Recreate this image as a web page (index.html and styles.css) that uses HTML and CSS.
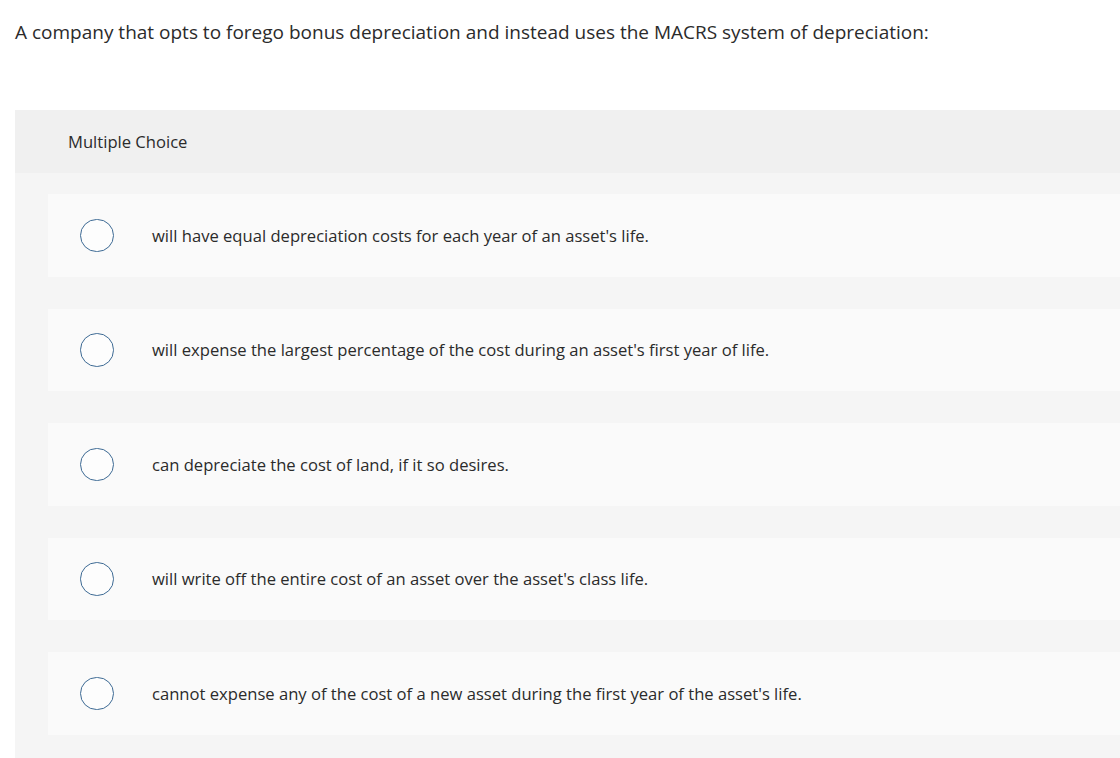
FILE: index.html
```html
<!DOCTYPE html>
<html>
<head>
<meta charset="utf-8">
<link rel="stylesheet" href="styles.css">
</head>
<body>
<div class="page">
  <p class="question">A company that opts to forego bonus depreciation and instead uses the MACRS system of depreciation:</p>
  <section class="panel">
    <div class="panel-head">Multiple Choice</div>
    <div class="options">
      <div class="option"><span class="radio"></span><span class="label">will have equal depreciation costs for each year of an asset's life.</span></div>
      <div class="option"><span class="radio"></span><span class="label">will expense the largest percentage of the cost during an asset's first year of life.</span></div>
      <div class="option"><span class="radio"></span><span class="label">can depreciate the cost of land, if it so desires.</span></div>
      <div class="option"><span class="radio"></span><span class="label">will write off the entire cost of an asset over the asset's class life.</span></div>
      <div class="option"><span class="radio"></span><span class="label">cannot expense any of the cost of a new asset during the first year of the asset's life.</span></div>
    </div>
  </section>
</div>
</body>
</html>
```

FILE: styles.css
```css
html, body {
  margin: 0;
  padding: 0;
  background: #ffffff;
  overflow: hidden;
}
body {
  font-family: "Open Sans", "Liberation Sans", sans-serif;
  color: #2b2b2b;
}
.page {
  padding: 0 0 0 15px;
}
.question {
  margin: 0;
  padding-top: 18px;
  height: 110px;
  box-sizing: border-box;
  font-size: 19px;
  line-height: 28px;
  color: #2b2b2b;
}
.panel {
  background: #f5f5f5;
  padding-bottom: 24px;
}
.panel-head {
  background: #f0f0f0;
  height: 63px;
  display: flex;
  align-items: center;
  padding-left: 53px;
  font-size: 16.6px;
  color: #2b2b2b;
}
.options {
  display: flex;
  flex-direction: column;
  gap: 32px;
  padding: 21px 0 0 33px;
}
.option {
  background: #fafafa;
  height: 82.5px;
  display: flex;
  align-items: center;
  padding-left: 32px;
}
.radio {
  width: 31.5px;
  height: 31.5px;
  border: 1.5px solid #3d6a94;
  border-radius: 50%;
  background: #fdfdfd;
  flex: none;
}
.label {
  margin-left: 38.5px;
  font-size: 16.6px;
  color: #2b2b2b;
}
```
